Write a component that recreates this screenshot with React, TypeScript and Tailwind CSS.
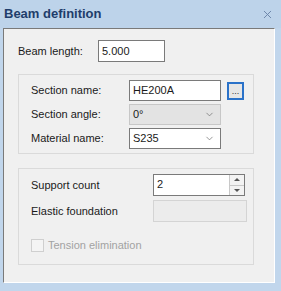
import { ChevronDown, X } from "lucide-react"

function Label({ children, w }: { children: React.ReactNode; w: string }) {
  return <span className={`${w} shrink-0 text-[11px] text-[#1a1a1a]`}>{children}</span>
}

function Combo({ value, disabled }: { value: string; disabled?: boolean }) {
  return (
    <div
      className={
        disabled
          ? "w-[92px] h-[21px] flex items-center justify-between pl-[3px] pr-[5px] border border-[#c7c7c7] bg-[#e3e3e3]"
          : "w-[92px] h-[21px] flex items-center justify-between pl-[3px] pr-[5px] border border-[#7a7a7a] bg-white"
      }
    >
      <span className="text-[11px] text-[#1a1a1a]">{value}</span>
      <ChevronDown className="h-[11px] w-[11px] text-[#6b6b6b]" strokeWidth={1.5} />
    </div>
  )
}

export default function App() {
  return (
    <div
      className="w-[281px] h-[291px] bg-[#c1d6ec] flex flex-col"
      style={{ fontFamily: '"Liberation Sans", Arial, sans-serif' }}
    >
      {/* Title bar */}
      <div className="h-[28px] shrink-0 flex items-center justify-between pl-[4px] pr-[7px] bg-[#bdd3ea]">
        <span className="text-[13px] font-bold text-[#1f3d6b]">Beam definition</span>
        <X className="h-[13px] w-[13px] text-[#6a83a8]" strokeWidth={1.75} />
      </div>

      {/* Panel */}
      <div className="flex-1 ml-[3px] mr-[6px] mb-[8px] bg-[#f0f0f0] border-l border-t border-l-[#7a7a7a] border-t-[#7a7a7a] border-r border-b border-r-white border-b-white pl-[14px] pt-[11px] flex flex-col">
        <div className="flex items-center">
          <Label w="w-[80px]">Beam length:</Label>
          <div className="w-[67px] h-[22px] flex items-center pl-[3px] border border-[#7a7a7a] bg-white">
            <span className="text-[11px] text-[#1a1a1a]">5.000</span>
          </div>
        </div>

        {/* Section group */}
        <div className="mt-[12px] w-[236px] border border-[#dadada] pl-[12px] pt-[5px] pb-[4px] flex flex-col gap-[3px]">
          <div className="flex items-center">
            <Label w="w-[98px]">Section name:</Label>
            <div className="w-[92px] h-[21px] flex items-center pl-[3px] border border-[#7a7a7a] bg-white">
              <span className="text-[11px] text-[#1a1a1a]">HE200A</span>
            </div>
            <div className="ml-[6px] w-[17px] h-[18px] border-2 border-[#2a72c9] bg-[#e6e6e6] flex items-end justify-center pb-[2px]">
              <span className="text-[9px] leading-none text-[#333]">...</span>
            </div>
          </div>
          <div className="flex items-center">
            <Label w="w-[98px]">Section angle:</Label>
            <Combo value="0°" disabled />
          </div>
          <div className="flex items-center">
            <Label w="w-[98px]">Material name:</Label>
            <Combo value="S235" />
          </div>
        </div>

        {/* Support group */}
        <div className="mt-[14px] w-[236px] border border-[#dadada] pl-[12px] pt-[5px] pb-[5px] flex flex-col gap-[4px]">
          <div className="flex items-center">
            <Label w="w-[122px]">Support count</Label>
            <div className="w-[92px] h-[22px] flex border border-[#7a7a7a] bg-white">
              <span className="flex-1 pl-[3px] text-[11px] leading-[18px] text-[#1a1a1a]">2</span>
              <div className="w-[15px] flex flex-col border-l border-[#c8c8c8] bg-[#f3f3f3]">
                <div className="flex-1 flex items-center justify-center border-b border-[#c8c8c8]">
                  <div className="w-0 h-0 border-l-[3px] border-r-[3px] border-b-[3px] border-l-transparent border-r-transparent border-b-[#555]" />
                </div>
                <div className="flex-1 flex items-center justify-center">
                  <div className="w-0 h-0 border-l-[3px] border-r-[3px] border-t-[3px] border-l-transparent border-r-transparent border-t-[#555]" />
                </div>
              </div>
            </div>
          </div>
          <div className="flex items-center">
            <Label w="w-[122px]">Elastic foundation</Label>
            <div className="w-[94px] h-[22px] border border-[#d4d4d4] bg-[#ececec]" />
          </div>
          <div className="flex items-center mt-[11px] mb-[5px]">
            <div className="w-[13px] h-[13px] border border-[#cfcfcf] bg-[#f4f4f4]" />
            <span className="ml-[4px] text-[11px] text-[#a2a2a2]">Tension elimination</span>
          </div>
        </div>
      </div>
    </div>
  )
}
